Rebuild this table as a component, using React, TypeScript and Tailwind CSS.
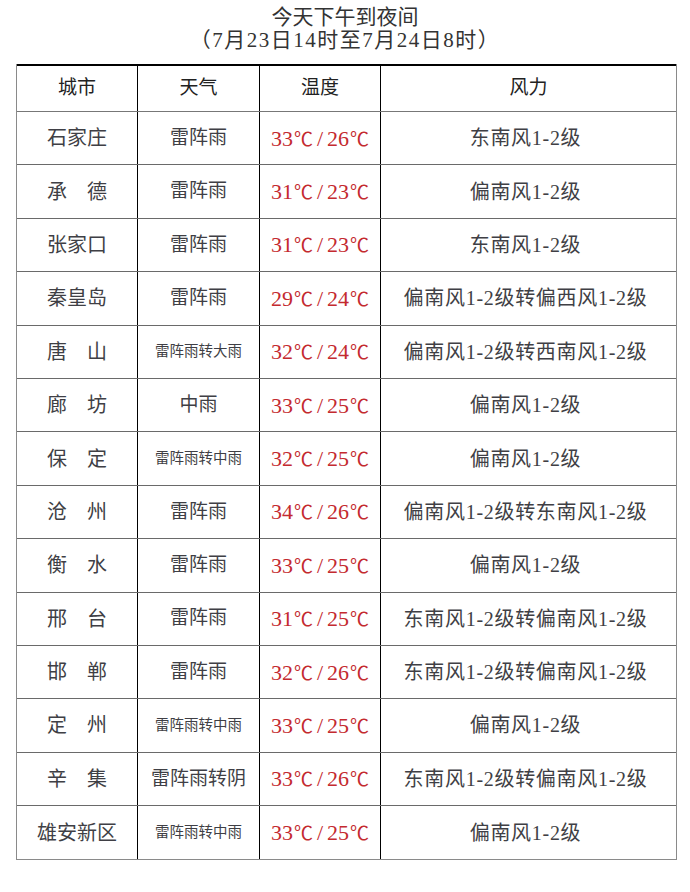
import React from 'react';

interface Row {
  city: string;
  weather: string;
  small?: boolean;
  temp: [string, string];
  wind: string;
}

const rows: Row[] = [
  { city: '石家庄', weather: '雷阵雨', temp: ['33', '26'], wind: '东南风1-2级' },
  { city: '承　德', weather: '雷阵雨', temp: ['31', '23'], wind: '偏南风1-2级' },
  { city: '张家口', weather: '雷阵雨', temp: ['31', '23'], wind: '东南风1-2级' },
  { city: '秦皇岛', weather: '雷阵雨', temp: ['29', '24'], wind: '偏南风1-2级转偏西风1-2级' },
  { city: '唐　山', weather: '雷阵雨转大雨', small: true, temp: ['32', '24'], wind: '偏南风1-2级转西南风1-2级' },
  { city: '廊　坊', weather: '中雨', temp: ['33', '25'], wind: '偏南风1-2级' },
  { city: '保　定', weather: '雷阵雨转中雨', small: true, temp: ['32', '25'], wind: '偏南风1-2级' },
  { city: '沧　州', weather: '雷阵雨', temp: ['34', '26'], wind: '偏南风1-2级转东南风1-2级' },
  { city: '衡　水', weather: '雷阵雨', temp: ['33', '25'], wind: '偏南风1-2级' },
  { city: '邢　台', weather: '雷阵雨', temp: ['31', '25'], wind: '东南风1-2级转偏南风1-2级' },
  { city: '邯　郸', weather: '雷阵雨', temp: ['32', '26'], wind: '东南风1-2级转偏南风1-2级' },
  { city: '定　州', weather: '雷阵雨转中雨', small: true, temp: ['33', '25'], wind: '偏南风1-2级' },
  { city: '辛　集', weather: '雷阵雨转阴', temp: ['33', '26'], wind: '东南风1-2级转偏南风1-2级' },
  { city: '雄安新区', weather: '雷阵雨转中雨', small: true, temp: ['33', '25'], wind: '偏南风1-2级' },
];

const font = "font-['Liberation_Serif','Noto_Sans_CJK_SC',serif]";
const cjk = "font-['Noto_Sans_CJK_SC',sans-serif]";

function Temp({ hi, lo }: { hi: string; lo: string }) {
  return (
    <span className="flex items-baseline text-[22px]">
      {hi}
      <span className={`${cjk} text-[19px] ml-[1px]`}>℃</span>
      <span className="mx-[4px]">/</span>
      {lo}
      <span className={`${cjk} text-[19px] ml-[1px]`}>℃</span>
    </span>
  );
}

export default function App() {
  return (
    <div className={`w-[690px] h-[892px] bg-white text-[#3f3f45] ${font}`}>
      {/* 标题 */}
      <div className="pt-[6px] h-[64px] flex flex-col items-center leading-[23px] text-[#333]">
        <div className="text-[21px]">今天下午到夜间</div>
        <div className="text-[21px] tracking-[1.5px]">（7月23日14时至7月24日8时）</div>
      </div>

      {/* 表格 */}
      <div className="ml-[16px] w-[661px] border-x border-[#8a8a8a] border-b">
        <div className="flex h-[48px] border-t-2 border-b border-t-black border-b-[#777]">
          <div className="w-[121px] flex items-center justify-center text-[19px] text-[#222] border-r border-black">城市</div>
          <div className="w-[122px] flex items-center justify-center text-[19px] text-[#222] border-r border-black">天气</div>
          <div className="w-[121px] flex items-center justify-center text-[19px] text-[#222] border-r border-black">温度</div>
          <div className="flex-1 flex items-center justify-center text-[19px] text-[#222]">风力</div>
        </div>
        {rows.map((r, i) => (
          <div
            key={r.city}
            className={`flex h-[53.4px] ${i < rows.length - 1 ? 'border-b border-[#6a6a6a]' : ''}`}
          >
            <div className="w-[121px] flex items-center justify-center text-[20px] border-r border-black">{r.city}</div>
            <div
              className={`w-[122px] flex items-center justify-center border-r border-black ${r.small ? 'text-[14.5px]' : 'text-[19px]'}`}
            >
              {r.weather}
            </div>
            <div className="w-[121px] flex items-center justify-center text-[#c42a2f] border-r border-black">
              <Temp hi={r.temp[0]} lo={r.temp[1]} />
            </div>
            <div className="flex-1 flex items-center justify-center text-[20px] tracking-[0.7px] pr-[6px]">{r.wind}</div>
          </div>
        ))}
      </div>
    </div>
  );
}
